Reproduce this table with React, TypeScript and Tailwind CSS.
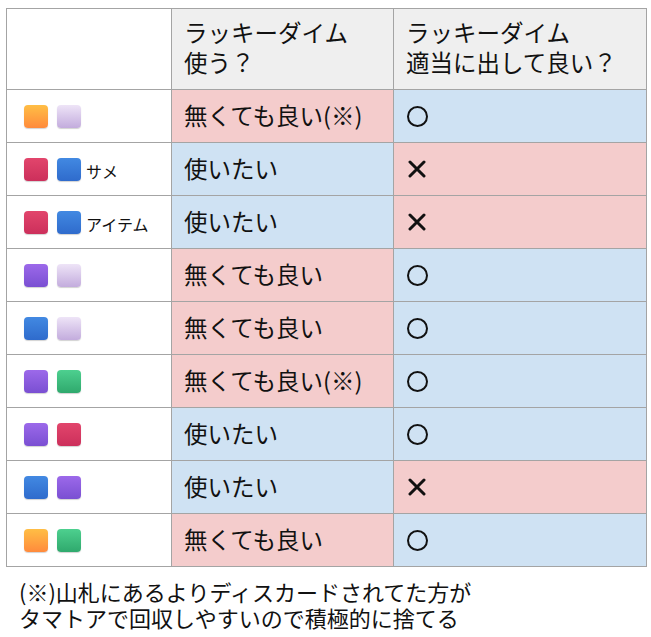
import React from 'react';

type Sq = 'orange' | 'lavender' | 'crimson' | 'blue' | 'purple' | 'green';

const sqClass: Record<Sq, string> = {
  orange: 'bg-gradient-to-b from-[#ffbe45] to-[#ff8a3c]',
  lavender: 'bg-gradient-to-b from-[#eee4f7] to-[#c3acdd]',
  crimson: 'bg-gradient-to-b from-[#e2456c] to-[#cc2f5b]',
  blue: 'bg-gradient-to-b from-[#4289e2] to-[#2f6bcc]',
  purple: 'bg-gradient-to-b from-[#9c69ea] to-[#7a4fd2]',
  green: 'bg-gradient-to-b from-[#4dd08f] to-[#2fa96d]',
};

interface Row {
  squares: [Sq, Sq];
  label?: string;
  use: string;
  useOk: boolean; // true → 無くても良い (pink)
  discard: boolean;
}

const rows: Row[] = [
  { squares: ['orange', 'lavender'], use: '無くても良い(※)', useOk: true, discard: true },
  { squares: ['crimson', 'blue'], label: 'サメ', use: '使いたい', useOk: false, discard: false },
  { squares: ['crimson', 'blue'], label: 'アイテム', use: '使いたい', useOk: false, discard: false },
  { squares: ['purple', 'lavender'], use: '無くても良い', useOk: true, discard: true },
  { squares: ['blue', 'lavender'], use: '無くても良い', useOk: true, discard: true },
  { squares: ['purple', 'green'], use: '無くても良い(※)', useOk: true, discard: true },
  { squares: ['purple', 'crimson'], use: '使いたい', useOk: false, discard: true },
  { squares: ['blue', 'purple'], use: '使いたい', useOk: false, discard: false },
  { squares: ['orange', 'green'], use: '無くても良い', useOk: true, discard: true },
];

const Square = ({ c }: { c: Sq }) => (
  <span
    className={`block w-[24px] h-[23px] rounded-[4px] shadow-[0_1px_1px_rgba(0,0,0,0.18)] ${sqClass[c]}`}
  />
);

export default function App() {
  return (
    <div
      className="w-[651px] h-[637px] bg-white pt-[8px] pl-[6px] text-[#111]"
      style={{ fontFamily: '"Noto Sans CJK JP", "Noto Sans", sans-serif' }}
    >
      <table className="border-collapse table-fixed w-[640px]">
        <colgroup>
          <col className="w-[165px]" />
          <col className="w-[222px]" />
          <col className="w-[253px]" />
        </colgroup>
        <thead>
          <tr className="h-[81px]">
            <th className="border border-[#a4a4a4] bg-white" />
            <th className="border border-[#a4a4a4] bg-[#efefef] text-left align-top font-normal text-[23.5px] leading-[30px] pl-[12px] pt-[8px] whitespace-nowrap">
              ラッキーダイム
              <br />
              使う？
            </th>
            <th className="border border-[#a4a4a4] bg-[#efefef] text-left align-top font-normal text-[23.5px] leading-[30px] pl-[12px] pt-[8px] whitespace-nowrap">
              ラッキーダイム
              <br />
              適当に出して良い？
            </th>
          </tr>
        </thead>
        <tbody>
          {rows.map((r, i) => (
            <tr key={i} className="h-[53px]">
              <td className="border border-[#a4a4a4] bg-white pl-[17px]">
                <div className="flex items-center">
                  <Square c={r.squares[0]} />
                  <span className="w-[9px]" />
                  <Square c={r.squares[1]} />
                  {r.label && <span className="ml-[5px] mt-[3px] text-[16px] leading-none">{r.label}</span>}
                </div>
              </td>
              <td
                className={`border border-[#a4a4a4] pl-[12px] text-[23.5px] leading-none whitespace-nowrap ${
                  r.useOk ? 'bg-[#f4cccc]' : 'bg-[#cfe2f3]'
                }`}
              >
                {r.use}
              </td>
              <td
                className={`border border-[#a4a4a4] pl-[13px] ${r.discard ? 'bg-[#cfe2f3]' : 'bg-[#f4cccc]'}`}
              >
                {r.discard ? (
                  <span className="block w-[21px] h-[21px] rounded-full border-[2px] border-[#111]" />
                ) : (
                  <svg width="18" height="18" viewBox="0 0 18 18" className="block ml-[1px]">
                    <path d="M2 2 L16 16 M16 2 L2 16" stroke="#111" strokeWidth="3" strokeLinecap="round" />
                  </svg>
                )}
              </td>
            </tr>
          ))}
        </tbody>
      </table>
      <p className="mt-[11px] ml-[13px] text-[22px] leading-[26px] whitespace-nowrap">
        (※)山札にあるよりディスカードされてた方が
        <br />
        タマトアで回収しやすいので積極的に捨てる
      </p>
    </div>
  );
}
